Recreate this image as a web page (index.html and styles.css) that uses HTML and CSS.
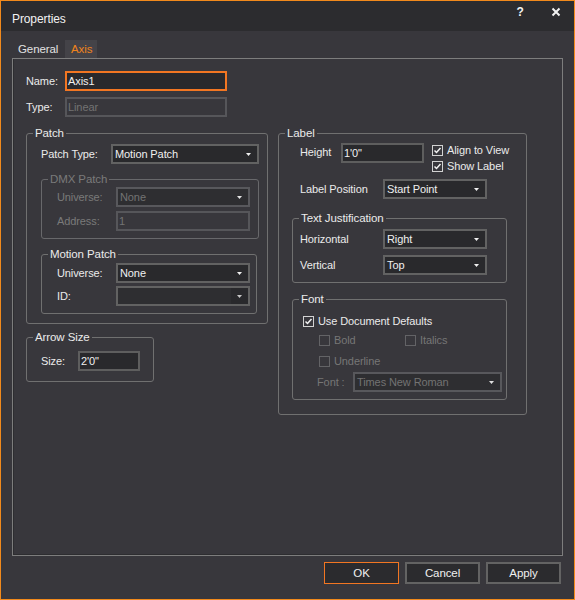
FILE: index.html
```
<!DOCTYPE html>
<html>
<head>
<meta charset="utf-8">
<link rel="stylesheet" href="styles.css">
</head>
<body>
<div class="dialog">
  <div class="titlebar">
    <span class="title">Properties</span>
    <span class="tb-icons">
      <span class="tb-btn help">?</span>
      <span class="tb-btn"><svg width="10" height="10" viewBox="0 0 10 10"><path d="M1.5 1.5 L8.5 8.5 M8.5 1.5 L1.5 8.5" stroke="#f2f2f2" stroke-width="2"/></svg></span>
    </span>
  </div>
  <div class="tabs">
    <span class="tab">General</span>
    <span class="tab active">Axis</span>
  </div>
  <div class="panel">
    <div class="row">
      <span class="lbl w-name">Name:</span>
      <div class="field focus w-162">Axis1</div>
    </div>
    <div class="row mt6">
      <span class="lbl w-name">Type:</span>
      <div class="field disabled w-162">Linear</div>
    </div>
    <div class="columns">
      <div class="col-left">
        <fieldset class="fs w-242">
          <legend>Patch</legend>
          <div class="fs-body patch-body">
            <div class="row">
              <span class="lbl w-70">Patch Type:</span>
              <div class="select w-148"><span>Motion Patch</span><svg class="arr" width="5" height="3" viewBox="0 0 5 3"><path d="M0 0 H5 L2.5 3 Z" fill="#f0f0f0"/></svg></div>
            </div>
            <fieldset class="fs w-218 mt8 dim">
              <legend>DMX Patch</legend>
              <div class="fs-body dmx-body">
                <div class="row">
                  <span class="lbl w-59">Universe:</span>
                  <div class="select disabled w-134"><span>None</span><svg class="arr" width="5" height="3" viewBox="0 0 5 3"><path d="M0 0 H5 L2.5 3 Z" fill="#e6e6e6"/></svg></div>
                </div>
                <div class="row mt4">
                  <span class="lbl w-59">Address:</span>
                  <div class="field disabled w-134">1</div>
                </div>
              </div>
            </fieldset>
            <fieldset class="fs w-216 mt8">
              <legend>Motion Patch</legend>
              <div class="fs-body motion-body">
                <div class="row">
                  <span class="lbl w-59">Universe:</span>
                  <div class="select w-134"><span>None</span><svg class="arr" width="5" height="3" viewBox="0 0 5 3"><path d="M0 0 H5 L2.5 3 Z" fill="#f0f0f0"/></svg></div>
                </div>
                <div class="row mt3">
                  <span class="lbl w-59">ID:</span>
                  <div class="select split w-134"><span class="sel-text"></span><span class="sel-btn"><svg width="5" height="3" viewBox="0 0 5 3"><path d="M0 0 H5 L2.5 3 Z" fill="#c8c8c8"/></svg></span></div>
                </div>
              </div>
            </fieldset>
          </div>
        </fieldset>
        <fieldset class="fs w-128 mt6">
          <legend>Arrow Size</legend>
          <div class="fs-body arrow-body">
            <div class="row">
              <span class="lbl w-37">Size:</span>
              <div class="field w-62">2'0&quot;</div>
            </div>
          </div>
        </fieldset>
      </div>
      <div class="col-right">
        <fieldset class="fs w-249">
          <legend>Label</legend>
          <div class="fs-body label-body">
            <div class="lbl-top">
              <span class="lbl w-41">Height</span>
              <div class="field w-83">1'0&quot;</div>
              <div class="checks">
                <div class="check"><span class="box"><svg width="9" height="9" viewBox="0 0 9 9"><path d="M1.5 4.5 L3.5 6.5 L7.5 2" fill="none" stroke="#f2f2f2" stroke-width="1.5"/></svg></span>Align to View</div>
                <div class="check"><span class="box"><svg width="9" height="9" viewBox="0 0 9 9"><path d="M1.5 4.5 L3.5 6.5 L7.5 2" fill="none" stroke="#f2f2f2" stroke-width="1.5"/></svg></span>Show Label</div>
              </div>
            </div>
            <div class="row mt5 indent">
              <span class="lbl w-83">Label Position</span>
              <div class="select w-104"><span>Start Point</span><svg class="arr" width="5" height="3" viewBox="0 0 5 3"><path d="M0 0 H5 L2.5 3 Z" fill="#f0f0f0"/></svg></div>
            </div>
            <fieldset class="fs w-215 mt12">
              <legend>Text Justification</legend>
              <div class="fs-body just-body">
                <div class="row">
                  <span class="lbl w-83">Horizontal</span>
                  <div class="select w-104"><span>Right</span><svg class="arr" width="5" height="3" viewBox="0 0 5 3"><path d="M0 0 H5 L2.5 3 Z" fill="#f0f0f0"/></svg></div>
                </div>
                <div class="row mt6">
                  <span class="lbl w-83">Vertical</span>
                  <div class="select w-104"><span>Top</span><svg class="arr" width="5" height="3" viewBox="0 0 5 3"><path d="M0 0 H5 L2.5 3 Z" fill="#f0f0f0"/></svg></div>
                </div>
              </div>
            </fieldset>
            <fieldset class="fs w-215 mt9">
              <legend>Font</legend>
              <div class="fs-body font-body">
                <div class="check"><span class="box"><svg width="9" height="9" viewBox="0 0 9 9"><path d="M1.5 4.5 L3.5 6.5 L7.5 2" fill="none" stroke="#f2f2f2" stroke-width="1.5"/></svg></span>Use Document Defaults</div>
                <div class="check-row mt3">
                  <div class="check off w-86"><span class="box"></span>Bold</div>
                  <div class="check off"><span class="box"></span>Italics</div>
                </div>
                <div class="check-row mt5">
                  <div class="check off"><span class="box"></span>Underline</div>
                </div>
                <div class="row mt3 font-row">
                  <span class="lbl dim-text w-36">Font :</span>
                  <div class="select disabled w-149"><span>Times New Roman</span><svg class="arr" width="5" height="3" viewBox="0 0 5 3"><path d="M0 0 H5 L2.5 3 Z" fill="#e0e0e0"/></svg></div>
                </div>
              </div>
            </fieldset>
          </div>
        </fieldset>
      </div>
    </div>
  </div>
  <div class="footer">
    <div class="btn primary">OK</div>
    <div class="btn">Cancel</div>
    <div class="btn">Apply</div>
  </div>
</div>
</body>
</html>
```

FILE: styles.css
```
* { box-sizing: border-box; }
html, body { margin: 0; padding: 0; background: #38373c; }
body {
  font-family: "Liberation Sans", Arial, sans-serif;
  font-size: 11px;
  letter-spacing: -0.1px;
  color: #ebebeb;
}
.dialog {
  width: 575px;
  height: 600px;
  border: 1px solid #f28a1c;
  background: #38373c;
  display: flex;
  flex-direction: column;
}
.titlebar {
  flex: none;
  height: 30px;
  background: #2c2c2f;
  display: flex;
  justify-content: space-between;
}
.title {
  margin: 11px 0 0 11px;
  font-size: 12px;
  line-height: 14px;
  color: #f2f2f2;
}
.tb-icons { display: flex; }
.tb-btn {
  width: 36px;
  height: 22px;
  display: flex;
  align-items: center;
  justify-content: center;
  color: #f2f2f2;
}
.help { font-weight: bold; font-size: 12px; }
.tabs {
  flex: none;
  height: 27px;
  padding: 9px 0 0 12px;
  display: flex;
  gap: 2px;
}
.tab {
  height: 18px;
  line-height: 18px;
  padding-left: 5px;
  width: 50px;
  color: #e2e2e2;
  font-size: 11.5px;
}
.tab.active {
  width: 32px;
  padding-left: 6px;
  background: #444348;
  color: #f0841c;
}
.panel {
  flex: none;
  margin-left: 11px;
  width: 551px;
  height: 498px;
  border: 1px solid #7d7d7d;
  box-shadow: inset 1px -1px 0 #2d2d30;
  padding: 12px 0 0 13px;
}
.row { display: flex; align-items: center; }
.lbl { flex: none; white-space: nowrap; }

.field {
  flex: none;
  height: 20px;
  line-height: 16px;
  border: 2px solid #5e5e5e;
  background: #29292c;
  padding-left: 1px;
  color: #f0f0f0;
  white-space: nowrap;
  overflow: hidden;
}
.field.focus { border-color: #f27622; }
.field.disabled {
  background: #38373c;
  border-color: #56565a;
  color: #737373;
}
.select {
  flex: none;
  height: 20px;
  border: 2px solid #626262;
  background: #29292c;
  padding: 0 6px 0 2px;
  display: flex;
  align-items: center;
  justify-content: space-between;
  color: #f0f0f0;
  white-space: nowrap;
}
.select.disabled {
  background: #2e2e31;
  border-color: #58585c;
  color: #737373;
}
.select.split { padding: 0; }
.sel-text { flex: 1; align-self: stretch; background: #2e2e31; }
.sel-btn {
  width: 17px;
  align-self: stretch;
  display: flex;
  align-items: center;
  justify-content: center;
  background: #29292c;
}
.arr { flex: none; }

.columns {
  display: flex;
  align-items: flex-start;
  gap: 10px;
  margin-top: 9px;
}
.fs {
  margin: 0;
  padding: 0;
  min-width: 0;
  border: 1px solid #707070;
  border-radius: 3px;
}
.fs > legend {
  margin-left: 6px;
  padding: 0 2px;
  line-height: 14px;
  font-size: 11.5px;
  color: #ebebeb;
}
.fs.dim { border-color: #68686b; }
.fs.dim > legend, .fs.dim .lbl { color: #7a7a7a; }
.fs-body { display: flex; flex-direction: column; align-items: flex-start; }
.patch-body { padding: 4px 0 9px 14px; }
.dmx-body { padding: 1px 0 7px 15px; }
.motion-body { padding: 2px 0 7px 15px; }
.arrow-body { padding: 7px 0 10px 14px; }
.label-body { padding: 3px 0 14px 13px; }
.just-body { padding: 4px 0 7px 7px; }
.font-body { padding: 7px 0 7px 10px; }

.lbl-top {
  display: flex;
  align-items: flex-start;
  padding-left: 8px;
}
.lbl-top .lbl { line-height: 18px; }
.indent { padding-left: 8px; }
.checks { margin: -1px 0 0 8px; display: flex; flex-direction: column; }
.check {
  height: 16px;
  display: flex;
  align-items: center;
  white-space: nowrap;
}
.box {
  flex: none;
  width: 11px;
  height: 11px;
  border: 1px solid #d2d2d2;
  margin-right: 4px;
  display: flex;
  align-items: center;
  justify-content: center;
}
.check.off { color: #767676; }
.check.off .box { border-color: #636366; }
.check-row { display: flex; padding-left: 16px; }
.font-row { padding-left: 14px; }
.dim-text { color: #767676; }

.footer {
  flex: none;
  display: flex;
  justify-content: flex-end;
  gap: 6px;
  padding: 6px 13px 0 0;
}
.btn {
  width: 75px;
  height: 22px;
  border: 2px solid #636363;
  background: #2b2b2e;
  display: flex;
  align-items: center;
  justify-content: center;
  font-size: 11.5px;
  color: #f0f0f0;
}
.btn.primary { border: 1px solid #f27622; }

/* sizing and spacing utilities (last, so they win over component margins) */
.w-name { width: 39px; }
.w-36 { width: 36px; }
.w-37 { width: 37px; }
.w-41 { width: 41px; }
.w-59 { width: 59px; }
.w-62 { width: 62px; }
.w-70 { width: 70px; }
.w-83 { width: 83px; }
.w-86 { width: 86px; }
.w-104 { width: 104px; }
.w-128 { width: 128px; }
.w-134 { width: 134px; }
.w-148 { width: 148px; }
.w-149 { width: 149px; }
.w-162 { width: 162px; }
.w-215 { width: 215px; }
.w-216 { width: 216px; }
.w-218 { width: 218px; }
.w-242 { width: 242px; }
.w-249 { width: 249px; }
.mt3 { margin-top: 3px; }
.mt4 { margin-top: 4px; }
.mt5 { margin-top: 5px; }
.mt6 { margin-top: 6px; }
.mt8 { margin-top: 8px; }
.mt9 { margin-top: 9px; }
.mt12 { margin-top: 12px; }
```
